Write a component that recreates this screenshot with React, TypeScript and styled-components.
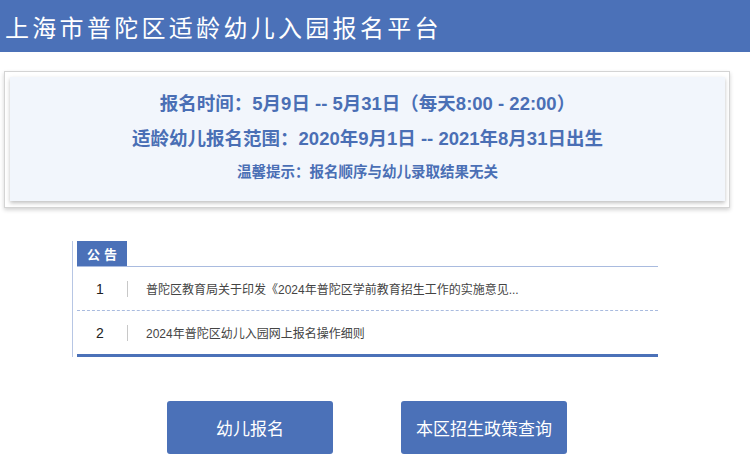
import React from "react";
import styled, { createGlobalStyle } from "styled-components";

const Global = createGlobalStyle`
  html, body { margin: 0; padding: 0; background: #fff; }
  body { font-family: "Liberation Sans", "Noto Sans CJK SC", sans-serif; }
`;

const BLUE = "#4b71b8";

const Header = styled.header`
  height: 52px;
  background: ${BLUE};
  display: flex;
  align-items: center;
  padding-left: 5px;
  color: #fff;
  font-size: 24px;
  letter-spacing: 3.3px;
  font-family: "Noto Sans CJK SC", sans-serif;
`;

const CardOuter = styled.section`
  margin: 19px 0 0 4px;
  width: 726px;
  box-sizing: border-box;
  border: 1px solid #d4d4d4;
  padding: 5px 4px 6px 5px;
  box-shadow: 0 2px 4px rgba(0, 0, 0, 0.18);
`;

const CardInner = styled.div`
  background: #f2f6fc;
  box-shadow: 0 2px 4px rgba(0, 0, 0, 0.25);
  padding: 10px 0 13px;
  display: flex;
  flex-direction: column;
  align-items: center;
  color: #4a6fb5;
  font-weight: bold;
`;

const Line = styled.div<{ $size: number; $h: number }>`
  font-size: ${(p) => p.$size}px;
  height: ${(p) => p.$h}px;
  line-height: ${(p) => p.$h}px;
  white-space: nowrap;
`;

const Notice = styled.section`
  margin: 33px 0 0 72px;
  width: 586px;
  border-left: 1px solid #b7c6e4;
  padding-left: 4px;
  box-sizing: border-box;
`;

const TabBar = styled.div`
  display: flex;
  border-bottom: 1px solid #a9bbdf;
`;

const Tab = styled.div`
  width: 50px;
  height: 25px;
  background: ${BLUE};
  color: #fff;
  font-weight: bold;
  font-size: 13px;
  letter-spacing: 4px;
  display: flex;
  align-items: center;
  justify-content: center;
  padding-left: 4px;
  box-sizing: border-box;
  font-family: "Noto Sans CJK SC", sans-serif;
`;

const List = styled.ul`
  list-style: none;
  margin: 0;
  padding: 0;
  border-bottom: 3px solid ${BLUE};
`;

const Row = styled.li<{ $last?: boolean }>`
  height: 43px;
  display: flex;
  align-items: center;
  border-bottom: ${(p) => (p.$last ? "none" : "1px dashed #a9bbdf")};
  font-size: 12px;
  color: #444;
`;

const Num = styled.span`
  width: 46px;
  text-align: center;
  font-size: 14px;
  color: #222;
`;

const Sep = styled.span`
  width: 1px;
  height: 16px;
  margin-left: 4px;
  background: #c8c8c8;
`;

const Title = styled.span`
  margin-left: 18px;
  white-space: nowrap;
`;

const Buttons = styled.div`
  margin: 44px 0 0 167px;
  display: flex;
  gap: 68px;
`;

const Btn = styled.button`
  width: 166px;
  height: 53px;
  border: none;
  border-radius: 3px;
  background: ${BLUE};
  color: #fff;
  font-size: 17px;
  font-family: "Noto Sans CJK SC", sans-serif;
  cursor: pointer;
`;

export default function App() {
  return (
    <>
      <Global />
      <Header>上海市普陀区适龄幼儿入园报名平台</Header>
      <CardOuter>
        <CardInner>
          <Line $size={18.5} $h={34}>报名时间：5月9日 -- 5月31日（每天8:00 - 22:00）</Line>
          <Line $size={18.5} $h={35}>适龄幼儿报名范围：2020年9月1日 -- 2021年8月31日出生</Line>
          <Line $size={14.5} $h={32}>温馨提示：报名顺序与幼儿录取结果无关</Line>
        </CardInner>
      </CardOuter>
      <Notice>
        <TabBar>
          <Tab>公告</Tab>
        </TabBar>
        <List>
          <Row>
            <Num>1</Num>
            <Sep />
            <Title>普陀区教育局关于印发《2024年普陀区学前教育招生工作的实施意见...</Title>
          </Row>
          <Row $last>
            <Num>2</Num>
            <Sep />
            <Title>2024年普陀区幼儿入园网上报名操作细则</Title>
          </Row>
        </List>
      </Notice>
      <Buttons>
        <Btn>幼儿报名</Btn>
        <Btn>本区招生政策查询</Btn>
      </Buttons>
    </>
  );
}
